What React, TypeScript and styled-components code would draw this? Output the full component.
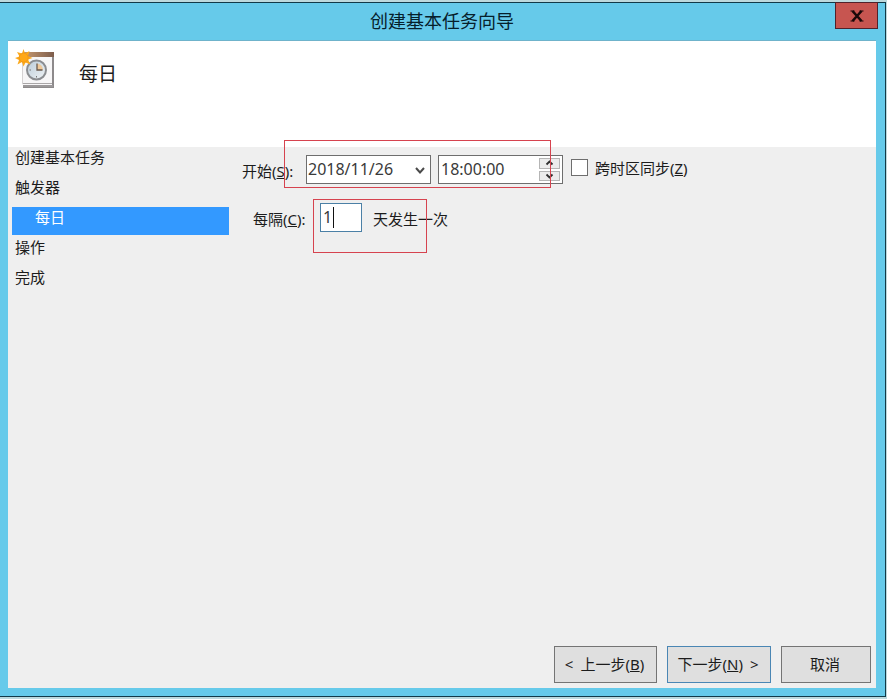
import React, { useState } from "react";
import styled, { createGlobalStyle } from "styled-components";

const GlobalStyle = createGlobalStyle`
  *, *::before, *::after { box-sizing: border-box; }
  body {
    margin: 0;
    background: #bdd9dd;
    color: #1c1c1c;
    font: 15px/20px "Noto Sans", "Noto Sans CJK SC", sans-serif;
  }
  button, input, select { font: inherit; color: inherit; margin: 0; }
`;

const Desktop = styled.div`
  display: flex;
  min-height: 100vh;
  padding: 2px 1px 2px 0;
`;

const Window = styled.main`
  flex: 1;
  display: flex;
  flex-direction: column;
  padding: 0 9px 8px 8px;
  background: #66caea;
  border: solid #123a48;
  border-width: 1px 1px 1px 0;
`;

const TitleBar = styled.header`
  position: relative;
  height: 38px;
  border-bottom: 1px solid #6fb3cb;
`;

const WindowTitle = styled.h1`
  margin: 0;
  font: 400 18px/34px "Noto Sans CJK SC", sans-serif;
  color: #06202b;
  text-align: center;
`;

const CloseButton = styled.button`
  position: absolute;
  top: -1px;
  right: -2px;
  display: grid;
  place-items: center;
  width: 43px;
  height: 27px;
  padding: 0;
  background: #c75550;
  border: 1px solid #51222b;
`;

const Banner = styled.section`
  display: flex;
  align-items: flex-start;
  gap: 23px;
  height: 106px;
  padding: 8px 7px;
  background: #fff;
`;

const PageTitle = styled.h2`
  margin: 0;
  padding-top: 12px;
  font: 400 19px/24px "Noto Sans CJK SC", sans-serif;
`;

const Body = styled.div`
  flex: 1;
  display: flex;
  background: #efefef;
`;

const Steps = styled.nav`
  flex: 0 0 221px;
  display: flex;
  flex-direction: column;
  gap: 2px;
  padding-left: 4px;
`;

const Step = styled.a<{ $active?: boolean }>`
  height: 28px;
  padding-left: ${(p) => (p.$active ? 23 : 3)}px;
  background: ${(p) => (p.$active ? "#3399ff" : "transparent")};
  color: ${(p) => (p.$active ? "#fff" : "inherit")};
  text-decoration: none;
`;

const Page = styled.form`
  flex: 1;
  display: flex;
  flex-direction: column;
  justify-content: space-between;
  padding: 8px 5px 5px 13px;
`;

const Fields = styled.div`
  display: flex;
  flex-direction: column;
  gap: 19px;
`;

const Row = styled.div<{ $indent?: boolean }>`
  position: relative;
  display: flex;
  align-items: center;
  height: 29px;
  padding-left: ${(p) => (p.$indent ? 11 : 0)}px;
  white-space: nowrap;
`;

const Label = styled.label<{ $width: number }>`
  flex: 0 0 ${(p) => p.$width}px;
  padding-top: 2px;
`;

const Box = styled.span<{ $width: number; $focused?: boolean }>`
  position: relative;
  display: flex;
  width: ${(p) => p.$width}px;
  height: 29px;
  background: #fff;
  border: 1px solid ${(p) => (p.$focused ? "#4b80a6" : "#6e6e6e")};
  & + & { margin-left: 7px; }
`;

const DateSelect = styled.select`
  appearance: none;
  width: 100%;
  padding: 0 0 2px 1px;
  background: transparent;
  border: 0;
  font-size: 16px;
  color: #3a3a3a;
  outline: none;
`;

const TextInput = styled.input`
  flex: 1;
  min-width: 0;
  padding: 0 2px 2px;
  background: transparent;
  border: 0;
  font-size: 16px;
  color: #3a3a3a;
  outline: none;
`;

const DropArrow = styled.svg`
  position: absolute;
  top: 10px;
  right: 5px;
  pointer-events: none;
`;

const Spinner = styled.span`
  display: grid;
  gap: 2px;
  width: 23px;
  padding: 2px 2px 2px 0;
`;

const SpinButton = styled.button`
  display: grid;
  place-items: center;
  padding: 0;
  background: #ececec;
  border: 1px solid #b5b5b5;
`;

const Caret = styled.span`
  position: absolute;
  top: 3px;
  left: 12px;
  width: 1px;
  height: 21px;
  background: #111;
`;

const Check = styled.label`
  display: flex;
  align-items: center;
  gap: 7px;
  margin-left: 8px;
  padding-bottom: 4px;
`;

const CheckBox = styled.input`
  appearance: none;
  width: 17px;
  height: 17px;
  background: #fff;
  border: 1px solid #6e6e6e;
  &:checked { background: #3399ff; }
`;

const Unit = styled.span`
  margin-left: 11px;
  padding-top: 2px;
`;

const Highlight = styled.span<{ $left: number; $top: number; $width: number; $height: number }>`
  position: absolute;
  left: ${(p) => p.$left}px;
  top: ${(p) => p.$top}px;
  width: ${(p) => p.$width}px;
  height: ${(p) => p.$height}px;
  border: 1px solid #d6434f;
  pointer-events: none;
`;

const Actions = styled.div`
  display: flex;
  justify-content: flex-end;
  gap: 10px;
`;

const ActionButton = styled.button<{ $width: number; $primary?: boolean }>`
  display: flex;
  align-items: center;
  justify-content: center;
  gap: 7px;
  width: ${(p) => p.$width}px;
  height: 37px;
  padding: 0 2px 2px 0;
  background: #dfdfdf;
  border: 1px solid ${(p) => (p.$primary ? "#4a86b4" : "#747474")};
`;

function TaskIcon() {
  return (
    <svg width="41" height="42" viewBox="0 0 41 42" aria-hidden="true">
      <defs>
        <linearGradient id="bar" x1="0" x2="1">
          <stop offset="0" stopColor="#c89a70" />
          <stop offset="1" stopColor="#7d5d4c" />
        </linearGradient>
        <linearGradient id="face" x1="0" y1="0" x2="1" y2="1">
          <stop offset="0" stopColor="#b9cbd9" />
          <stop offset="1" stopColor="#f1f3f5" />
        </linearGradient>
      </defs>
      <path d="M8 3h31v36H8z" fill="#8d8a8b" />
      <path d="M7 8h30v28H7z" fill="#f7f6f7" />
      <path d="M8 3h31v5H8z" fill="url(#bar)" />
      <path d="M7 34.5h30M8 37h30" stroke="#aaa7a8" />
      <path d="M7.500 8v27" stroke="#d5d2d3" />
      <circle cx="21.500" cy="21" r="9.500" fill="url(#face)" stroke="#8b8d91" strokeWidth="2" />
      <path d="M22 21v-6.500a7 7 0 0 1 6 6.500z" fill="#efc99a" />
      <path d="M22 14.500V21h5.500" fill="none" stroke="#695a4f" strokeWidth="1.300" />
      <path d="M21.500 27v1.500M14.500 21h1.500" stroke="#777" />
      <path
        d="M8.500 0l1.500 4.500L14.500 2l-1.500 5 4.500 2-4.500 1.500 2.500 5-5-2-2 4-1.500-4.500L2.500 15.500l1.500-4.500L0 9l4.500-1.500L2 3l5 1.500z"
        fill="#fba91c"
      />
      <circle cx="8.700" cy="8.700" r="4.500" fill="#ffa817" stroke="#f39a16" />
    </svg>
  );
}

function Chevron({ up = false }: { up?: boolean }) {
  return (
    <svg width="9" height="6" viewBox="0 0 9 6" aria-hidden="true">
      <path d={up ? "M1.500 4.500l3-3 3 3" : "M1.500 1.500l3 3 3-3"} fill="none" stroke="#303030" strokeWidth="1.800" />
    </svg>
  );
}

const steps = ["创建基本任务", "触发器", "每日", "操作", "完成"];

export default function App() {
  const [hour, setHour] = useState(18);
  const [days, setDays] = useState("1");
  const shift = (by: number) => setHour((h) => (h + by + 24) % 24);

  return (
    <>
      <GlobalStyle />
      <Desktop>
        <Window>
          <TitleBar>
            <WindowTitle>创建基本任务向导</WindowTitle>
            <CloseButton type="button" aria-label="关闭">
              <svg width="14" height="12" viewBox="0 0 14 12" aria-hidden="true">
                <path d="M2.500 1l9 10M11.500 1l-9 10" stroke="#1a0909" strokeWidth="2.600" />
                <path d="M.5 1h4M9.500 1h4M.5 11h4M9.500 11h4" stroke="#1a0909" strokeWidth="1.200" />
              </svg>
            </CloseButton>
          </TitleBar>
          <Banner>
            <TaskIcon />
            <PageTitle>每日</PageTitle>
          </Banner>
          <Body>
            <Steps>
              {steps.map((name) => (
                <Step key={name} href="#" $active={name === "每日"}>
                  {name}
                </Step>
              ))}
            </Steps>
            <Page onSubmit={(e) => e.preventDefault()}>
              <Fields>
                <Row>
                  <Label $width={64} htmlFor="date">
                    开始(<u>S</u>):
                  </Label>
                  <Box $width={125}>
                    <DateSelect id="date">
                      <option>2018/11/26</option>
                    </DateSelect>
                    <DropArrow width="10" height="9" viewBox="0 0 10 9" aria-hidden="true">
                      <path d="M1 2l4 4.500L9 2" fill="none" stroke="#4a4a4a" strokeWidth="2" />
                    </DropArrow>
                  </Box>
                  <Box $width={125}>
                    <TextInput aria-label="时间" value={`${String(hour).padStart(2, "0")}:00:00`} readOnly />
                    <Spinner>
                      <SpinButton type="button" aria-label="增加" onClick={() => shift(1)}>
                        <Chevron up />
                      </SpinButton>
                      <SpinButton type="button" aria-label="减少" onClick={() => shift(-1)}>
                        <Chevron />
                      </SpinButton>
                    </Spinner>
                  </Box>
                  <Check>
                    <CheckBox type="checkbox" />
                    <span>
                      跨时区同步(<u>Z</u>)
                    </span>
                  </Check>
                  <Highlight $left={42} $top={-15} $width={267} $height={48} />
                </Row>
                <Row $indent>
                  <Label $width={67} htmlFor="days">
                    每隔(<u>C</u>):
                  </Label>
                  <Box $width={42} $focused>
                    <TextInput id="days" value={days} onChange={(e) => setDays(e.target.value)} />
                    <Caret />
                  </Box>
                  <Unit>天发生一次</Unit>
                  <Highlight $left={71} $top={-4} $width={114} $height={54} />
                </Row>
              </Fields>
              <Actions>
                <ActionButton type="button" $width={103}>
                  <span>&lt;</span>
                  <span>
                    上一步(<u>B</u>)
                  </span>
                </ActionButton>
                <ActionButton type="submit" $width={104} $primary>
                  <span>
                    下一步(<u>N</u>)
                  </span>
                  <span>&gt;</span>
                </ActionButton>
                <ActionButton type="button" $width={90}>
                  取消
                </ActionButton>
              </Actions>
            </Page>
          </Body>
        </Window>
      </Desktop>
    </>
  );
}
